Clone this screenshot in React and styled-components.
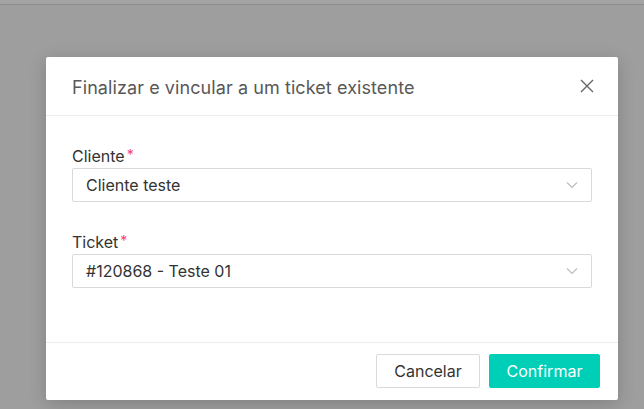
import styled, { createGlobalStyle } from 'styled-components'

const GlobalStyle = createGlobalStyle`
    html, body {
        margin: 0;
        padding: 0;
        background: #9e9e9e;
        font-family: Inter, "Noto Sans", sans-serif;
    }
`

const Page = styled.div`
    width: 644px;
    height: 409px;
    overflow: hidden;
    background: #9e9e9e;
`

const TopStrip = styled.div`
    height: 4px;
    background: #a3a3a3;
    border-bottom: 1px solid #8d8d8d;
`

const Modal = styled.div`
    margin: 52px 0 0 46px;
    width: 572px;
    height: 343px;
    background: #fff;
    border-radius: 2px;
    box-shadow: 0 4px 18px rgba(0, 0, 0, 0.18);
    display: flex;
    flex-direction: column;
`

const Header = styled.div`
    height: 58px;
    padding: 0 20px 0 26px;
    display: flex;
    align-items: center;
    justify-content: space-between;
    border-bottom: 1px solid #ececec;
`

const Title = styled.h2`
    margin: 2px 0 0;
    font-size: 18px;
    font-weight: 400;
    color: #585858;
    letter-spacing: 0.08px;
`

const CloseButton = styled.button`
    border: none;
    background: none;
    padding: 0;
    width: 22px;
    height: 22px;
    display: flex;
    align-items: center;
    justify-content: center;
    cursor: pointer;
`

const Body = styled.div`
    flex: 1;
    padding: 29px 26px 0;
    display: flex;
    flex-direction: column;
    gap: 29px;
`

const Field = styled.div`
    display: flex;
    flex-direction: column;
`

const Label = styled.label`
    font-size: 16px;
    line-height: 22px;
    height: 22px;
    color: #333;
    margin-bottom: 1px;
`

const Required = styled.span`
    color: #f5426c;
    margin-left: 2px;
    font-size: 14px;
    line-height: 0;
    vertical-align: 2px;
`

const Select = styled.div`
    height: 34px;
    box-sizing: border-box;
    border: 1px solid #d9d9d9;
    border-radius: 2px;
    padding: 0 13px;
    display: flex;
    align-items: center;
    justify-content: space-between;
    font-size: 16px;
    color: #333;
`

const Footer = styled.div`
    height: 58px;
    box-sizing: border-box;
    border-top: 1px solid #ececec;
    padding: 0 18px 1px;
    display: flex;
    align-items: center;
    justify-content: flex-end;
    gap: 9px;
`

const Button = styled.button`
    height: 34px;
    width: ${p => p.$width}px;
    border-radius: 2px;
    font-family: inherit;
    font-size: 16px;
    cursor: pointer;
    border: 1px solid ${p => (p.$primary ? '#00cfb7' : '#d9d9d9')};
    background: ${p => (p.$primary ? '#00cfb7' : '#fff')};
    color: ${p => (p.$primary ? '#fff' : '#333')};
`

const Chevron = () => (
    <svg width="12" height="8" viewBox="0 0 12 8" fill="none">
        <path d="M1 1.5 6 6.5 11 1.5" stroke="#bdbdbd" strokeWidth="1.2" />
    </svg>
)

const App = () => {
    const fields = [
        { label: 'Cliente', value: 'Cliente teste' },
        { label: 'Ticket', value: '#120868 - Teste 01' },
    ]

    return (
        <Page>
            <GlobalStyle />
            <TopStrip />
            <Modal>
                <Header>
                    <Title>Finalizar e vincular a um ticket existente</Title>
                    <CloseButton aria-label="Fechar">
                        <svg width="14" height="14" viewBox="0 0 14 14">
                            <path d="M1 1 13 13M13 1 1 13" stroke="#666" strokeWidth="1.4" />
                        </svg>
                    </CloseButton>
                </Header>
                <Body>
                    {fields.map(f => (
                        <Field key={f.label}>
                            <Label>
                                {f.label}
                                <Required>*</Required>
                            </Label>
                            <Select>
                                <span>{f.value}</span>
                                <Chevron />
                            </Select>
                        </Field>
                    ))}
                </Body>
                <Footer>
                    <Button $width={104}>Cancelar</Button>
                    <Button $primary $width={111}>Confirmar</Button>
                </Footer>
            </Modal>
        </Page>
    )
}

export default App
